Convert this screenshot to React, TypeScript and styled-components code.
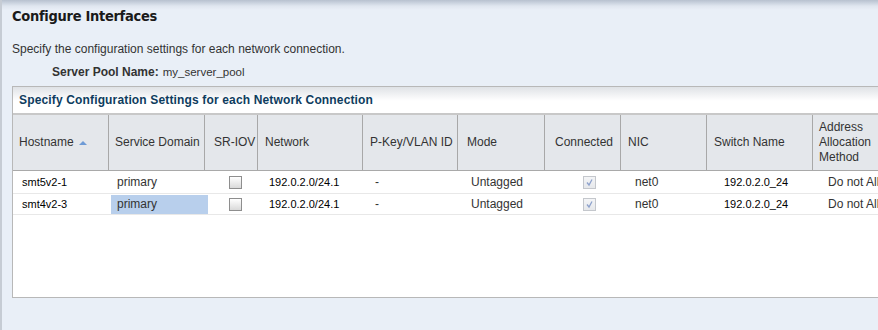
import React from "react";
import styled, { createGlobalStyle } from "styled-components";

const GlobalStyle = createGlobalStyle`
  html, body {
    margin: 0;
    padding: 0;
    background: #e9eff7;
    overflow: hidden;
  }
`;

const Page = styled.div`
  width: 876px;
  height: 330px;
  border-left: 2px solid #c6ccd4;
  background: linear-gradient(#b7c1cf 0px, #dfe6ef 6px, #e9eff7 10px);
  font-family: "Liberation Sans", Arial, sans-serif;
  overflow: hidden;
`;

const Heading = styled.h1`
  margin: 0;
  padding: 6px 0 0 10px;
  height: 24px;
  font-size: 14.5px;
  line-height: 20px;
  font-weight: bold;
  color: #1a1a1a;
  font-family: "DejaVu Sans Condensed", "DejaVu Sans", sans-serif;
  letter-spacing: -0.3px;
`;

const Intro = styled.p`
  margin: 12px 0 0 10px;
  font-size: 12px;
  line-height: 14px;
  color: #333;
`;

const PoolLine = styled.div`
  margin: 9px 0 0 50px;
  font-size: 12px;
  line-height: 14px;
  color: #333;
`;

const PoolLabel = styled.span`
  font-weight: bold;
  color: #333;
  margin-right: 4px;
`;

const PoolValue = styled.span`
  font-size: 11.5px;
`;

const Panel = styled.section`
  margin: 7px 0 0 10px;
  width: 900px;
  height: 210px;
  border: 1px solid #b8b8b8;
  background: #fff;
`;

const PanelTitle = styled.div`
  height: 26px;
  padding-left: 6px;
  display: flex;
  align-items: center;
  background: linear-gradient(#dfe2e6 0px, #fbfbfc 12px, #ffffff 14px);
  border-bottom: 2px solid #c8c8c8;
  font-size: 12px;
  font-weight: bold;
  letter-spacing: 0.15px;
  color: #0e3c5e;
`;

const cols = "96px 96px 53px 105px 95px 87px 76px 86px 106px 100px";

const HeaderRow = styled.div`
  display: grid;
  grid-template-columns: ${cols};
  height: 55px;
  background: #e4e7eb;
  border-bottom: 1px solid #a9a9a9;
`;

const HeadCell = styled.div<{ $pad?: number }>`
  display: flex;
  align-items: center;
  padding-left: ${(p) => p.$pad ?? 6}px;
  border-right: 1px solid #a8a8a8;
  font-size: 12px;
  line-height: 15px;
  color: #333;
  &:last-child {
    border-right: none;
  }
`;

const SortArrow = styled.span`
  display: inline-block;
  width: 0;
  height: 0;
  margin-left: 5px;
  border-left: 4px solid transparent;
  border-right: 4px solid transparent;
  border-bottom: 4px solid #6e9bd6;
`;

const BodyRow = styled.div<{ $h: number }>`
  display: grid;
  grid-template-columns: ${cols};
  height: ${(p) => p.$h}px;
  border-bottom: 1px solid #e8e8e8;
`;

const Cell = styled.div<{ $pad?: number; $small?: boolean; $dark?: boolean }>`
  display: flex;
  align-items: center;
  padding-left: ${(p) => p.$pad ?? 8}px;
  font-size: ${(p) => (p.$small ? "11px" : "12px")};
  color: ${(p) => (p.$dark ? "#000" : "#333")};
  white-space: nowrap;
  overflow: visible;
`;

const FieldValue = styled.span<{ $active?: boolean }>`
  display: flex;
  align-items: center;
  flex-shrink: 0;
  height: 19px;
  width: 91px;
  margin-left: -6px;
  padding-left: 6px;
  background: ${(p) => (p.$active ? "#b8cfec" : "transparent")};
`;

const Box = styled.span<{ $checked?: boolean }>`
  position: relative;
  display: inline-block;
  width: 11px;
  height: 11px;
  border: 1px solid ${(p) => (p.$checked ? "#c4c7cc" : "#8e8e8e")};
  background: ${(p) =>
    p.$checked
      ? "linear-gradient(#f4f5f7, #e6e8eb)"
      : "linear-gradient(#ffffff, #d9d9d9)"};
`;

const Check = styled.svg`
  position: absolute;
  left: 1px;
  top: 1px;
`;

const CheckBox = ({ checked }: { checked?: boolean }) => (
  <Box $checked={checked}>
    {checked && (
      <Check width="9" height="9" viewBox="0 0 9 9">
        <path d="M2 4.5 L4 7 L7 1.5" stroke="#8ea2cc" strokeWidth="1.3" fill="none" />
      </Check>
    )}
  </Box>
);

const rows = [
  { host: "smt5v2-1", active: false, h: 22 },
  { host: "smt4v2-3", active: true, h: 20 },
];

export default function App() {
  return (
    <>
      <GlobalStyle />
      <Page>
        <Heading>Configure Interfaces</Heading>
        <Intro>Specify the configuration settings for each network connection.</Intro>
        <PoolLine>
          <PoolLabel>Server Pool Name:</PoolLabel>
          <PoolValue>my_server_pool</PoolValue>
        </PoolLine>
        <Panel>
          <PanelTitle>Specify Configuration Settings for each Network Connection</PanelTitle>
          <HeaderRow>
            <HeadCell>
              Hostname
              <SortArrow />
            </HeadCell>
            <HeadCell>Service Domain</HeadCell>
            <HeadCell $pad={9}>SR-IOV</HeadCell>
            <HeadCell $pad={7}>Network</HeadCell>
            <HeadCell $pad={7}>P-Key/VLAN ID</HeadCell>
            <HeadCell $pad={9}>Mode</HeadCell>
            <HeadCell $pad={10}>Connected</HeadCell>
            <HeadCell $pad={7}>NIC</HeadCell>
            <HeadCell $pad={7}>Switch Name</HeadCell>
            <HeadCell>
              Address
              <br />
              Allocation
              <br />
              Method
            </HeadCell>
          </HeaderRow>
          {rows.map((r) => (
            <BodyRow key={r.host} $h={r.h}>
              <Cell $pad={9} $small $dark>
                {r.host}
              </Cell>
              <Cell $pad={8}>
                <FieldValue $active={r.active}>primary</FieldValue>
              </Cell>
              <Cell $pad={24}>
                <CheckBox />
              </Cell>
              <Cell $pad={11} $small $dark>
                192.0.2.0/24.1
              </Cell>
              <Cell $pad={12}>-</Cell>
              <Cell $pad={13}>Untagged</Cell>
              <Cell $pad={38}>
                <CheckBox checked />
              </Cell>
              <Cell $pad={14}>net0</Cell>
              <Cell $pad={17} $small $dark>
                192.0.2.0_24
              </Cell>
              <Cell $pad={15}>Do not All</Cell>
            </BodyRow>
          ))}
        </Panel>
      </Page>
    </>
  );
}
